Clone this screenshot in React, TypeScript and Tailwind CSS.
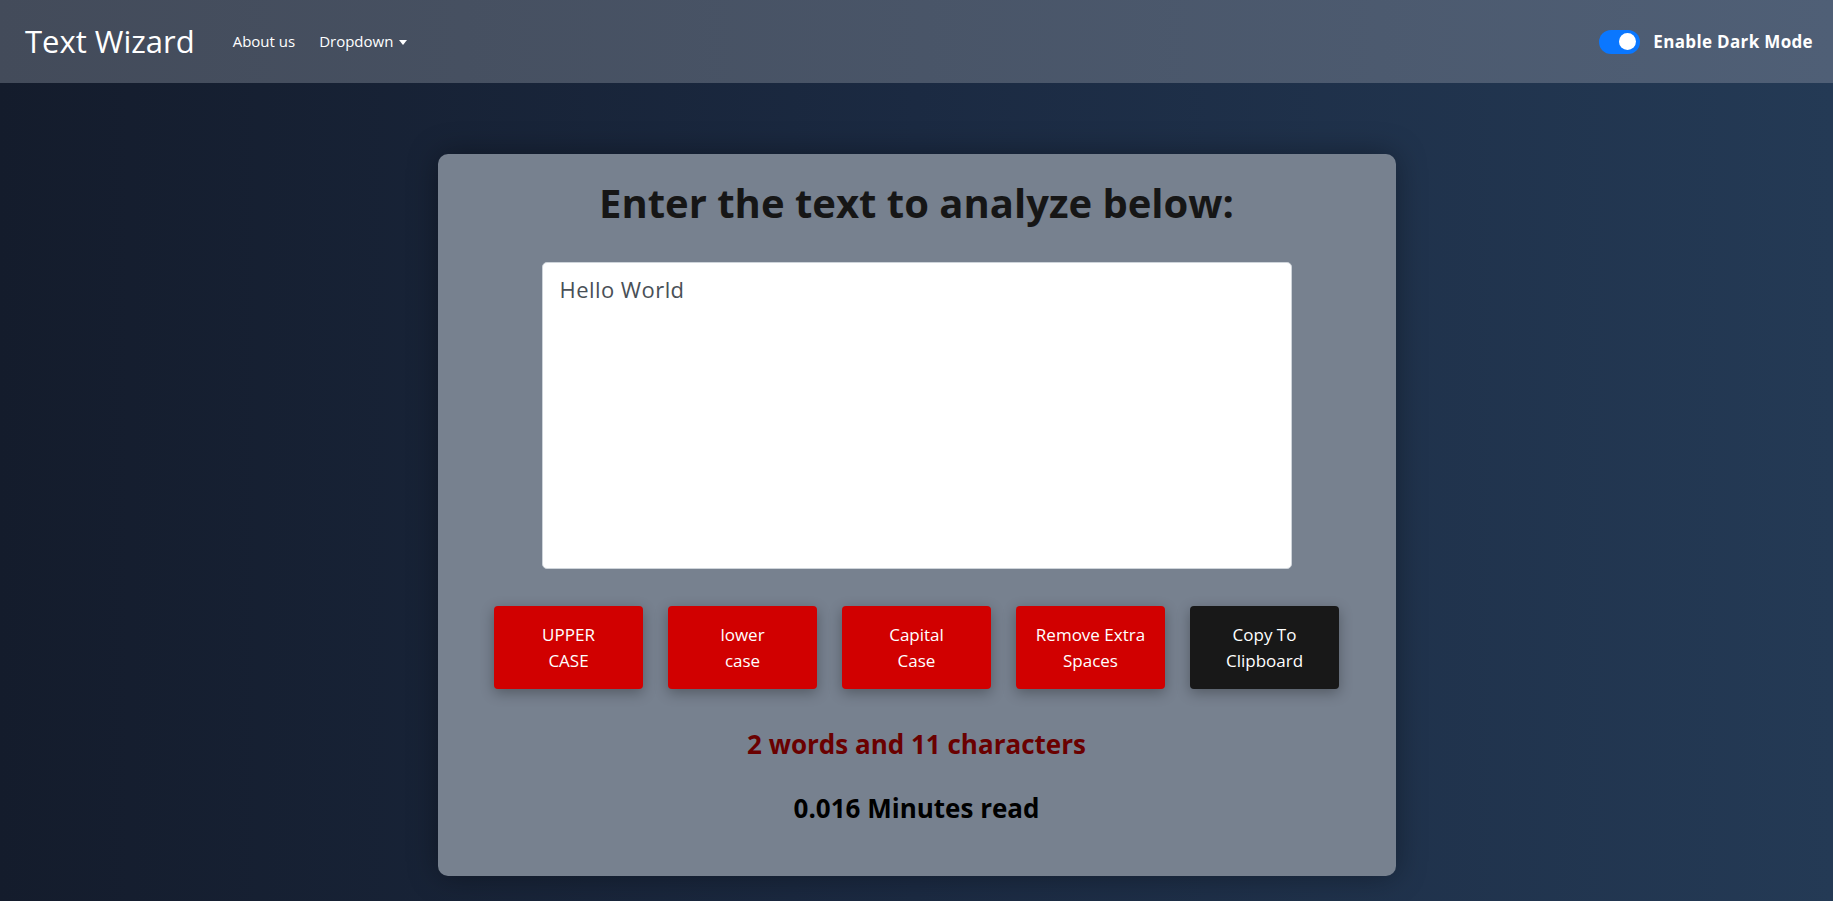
import { useState } from 'react';

const FONT = "font-['Open_Sans',_'Noto_Sans',_sans-serif]";

const buttons = [
  { lines: ['UPPER', 'CASE'], dark: false },
  { lines: ['lower', 'case'], dark: false },
  { lines: ['Capital', 'Case'], dark: false },
  { lines: ['Remove Extra', 'Spaces'], dark: false },
  { lines: ['Copy To', 'Clipboard'], dark: true },
];

const Navbar = () => (
  <nav className="flex h-[83px] items-center justify-between bg-gradient-to-r from-[#434b5a] to-[#4f5f76] pl-[25px] pr-[20px]">
    <div className="flex items-center">
      <a className="text-[31px] font-normal leading-none text-white">Text Wizard</a>
      <ul className="ml-[38px] flex items-center gap-[24px] text-[15px] text-white">
        <li>About us</li>
        <li className="flex items-center gap-[6px]">
          Dropdown
          <span className="mt-[1px] h-0 w-0 border-x-[4px] border-t-[5px] border-x-transparent border-t-white" />
        </li>
      </ul>
    </div>
    <div className="flex items-center gap-[13px]">
      <span className="flex h-[24px] w-[41px] items-center justify-end rounded-full bg-[#0a77ff] pr-[4px]">
        <span className="h-[17px] w-[17px] rounded-full bg-white" />
      </span>
      <span className="text-[17px] font-bold tracking-[0.02em] text-white">Enable Dark Mode</span>
    </div>
  </nav>
);

export default function App() {
  const [text, setText] = useState('Hello World');
  const words = text.split(/\s+/).filter((w) => w.length > 0).length;

  return (
    <div className={`${FONT} min-h-[901px] bg-gradient-to-r from-[#141c2c] via-[#1b2a42] to-[#243a55]`}>
      <Navbar />
      <main className="pt-[71px]">
        <section className="mx-auto flex w-[958px] flex-col items-center rounded-[10px] bg-[#77818f] pb-[52px] pt-[25px] shadow-[0_0_30px_rgba(0,0,0,0.35)]">
          <h1 className="text-[40px] font-bold leading-[48px] text-[#161616]">
            Enter the text to analyze below:
          </h1>
          <textarea
            value={text}
            onChange={(e) => setText(e.target.value)}
            className="mt-[35px] h-[307px] w-[750px] resize-none rounded-[5px] border border-[#ced4da] bg-white px-[17px] py-[11px] text-[22px] leading-[30px] tracking-[0.02em] text-[#495057] outline-none"
          />
          <div className="mt-[37px] flex gap-[25px]">
            {buttons.map((b) => (
              <button
                key={b.lines.join(' ')}
                className={`h-[83px] w-[149px] rounded-[4px] px-[6px] text-[17px] leading-[26px] text-white shadow-[0_4px_14px_rgba(0,0,0,0.3)] ${
                  b.dark ? 'bg-[#181818]' : 'bg-[#d10000]'
                }`}
              >
                {b.lines[0]}
                <br />
                {b.lines[1]}
              </button>
            ))}
          </div>
          <p className="mt-[40px] text-[26px] font-bold leading-[31px] text-[#6a0000]">
            {words} words and {text.length} characters
          </p>
          <p className="mt-[33px] text-[26px] font-bold leading-[31px] text-black">
            {(0.008 * words).toFixed(3)} Minutes read
          </p>
        </section>
      </main>
    </div>
  );
}
